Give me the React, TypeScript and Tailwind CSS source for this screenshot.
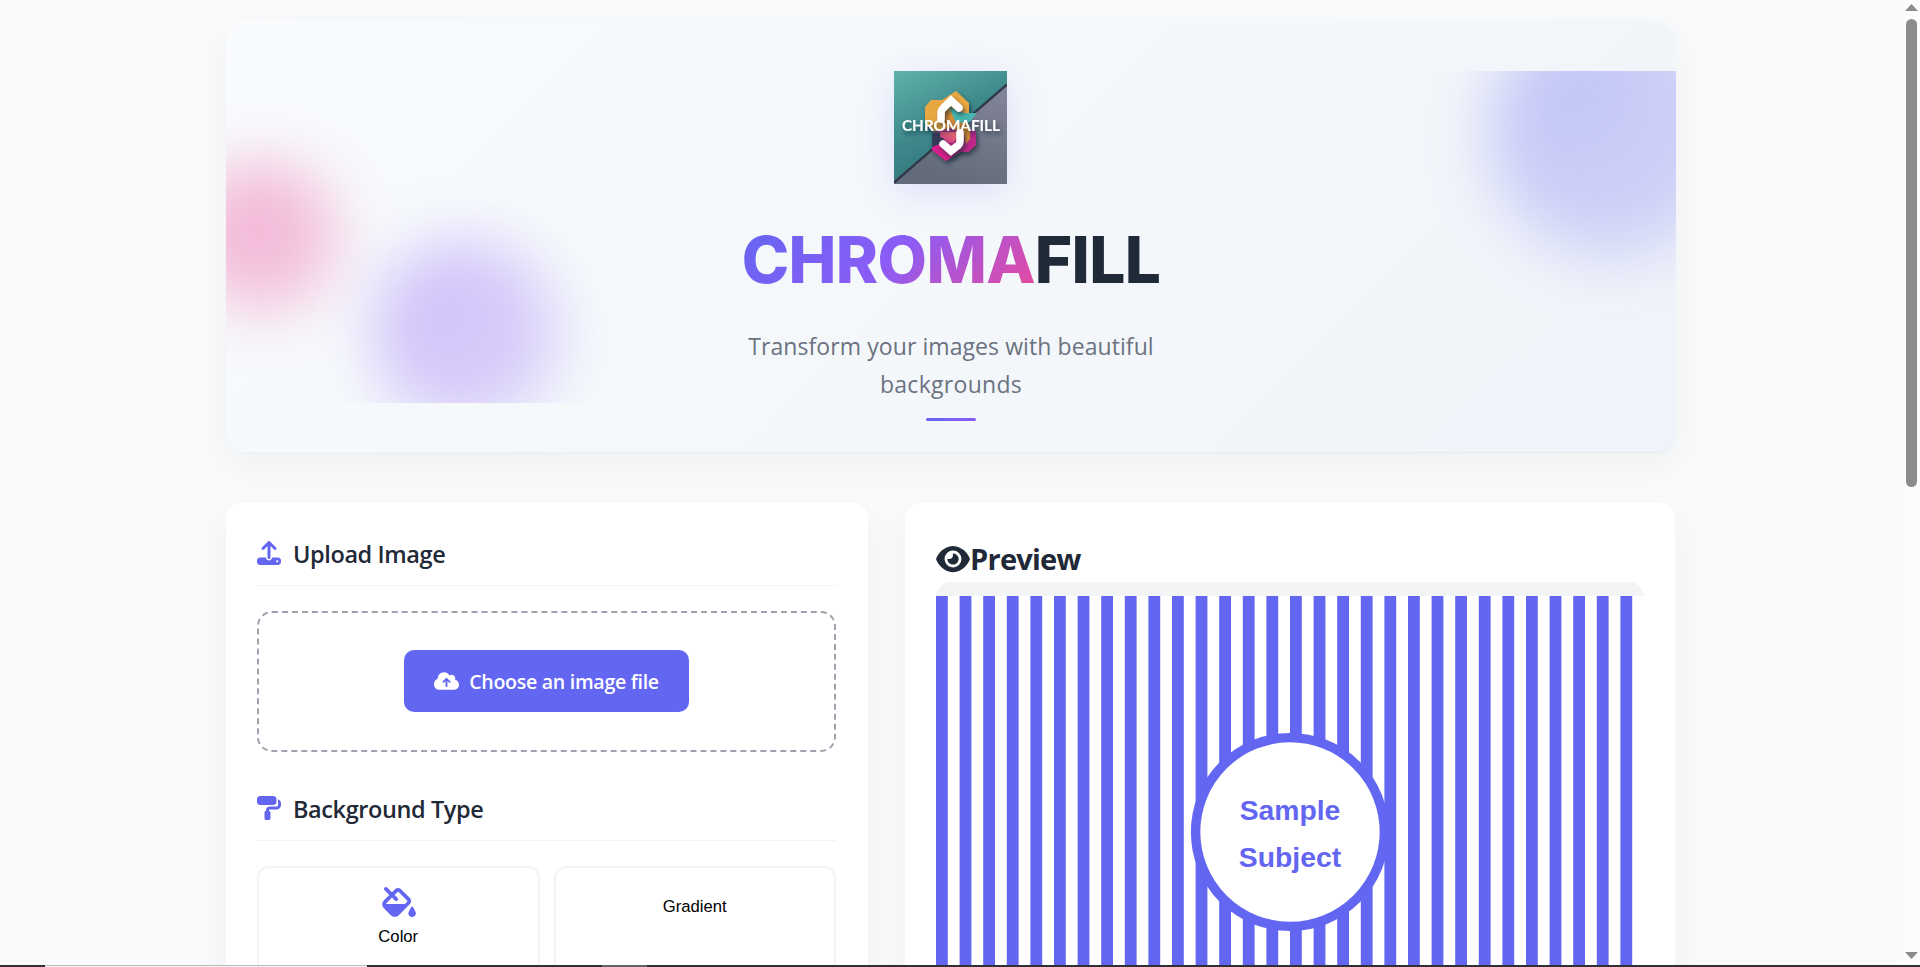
import type { ReactNode } from "react";
import { FaCloudArrowUp, FaEye, FaFillDrip, FaPaintRoller, FaUpload } from "react-icons/fa6";

function Logo() {
  return (
    <svg
      viewBox="0 0 113 113"
      className="relative h-[113px] w-[113px] shadow-[0_8px_38px_rgba(99,102,241,0.17)]"
    >
      <defs>
        <linearGradient id="teal" x1="0" y1="0" x2="0.5" y2="1">
          <stop offset="0" stopColor="#5fb3aa" />
          <stop offset="0.5" stopColor="#3f8a8c" />
          <stop offset="1" stopColor="#2f7078" />
        </linearGradient>
        <linearGradient id="slate" x1="1" y1="0" x2="0.6" y2="1">
          <stop offset="0" stopColor="#85869a" />
          <stop offset="1" stopColor="#636b7a" />
        </linearGradient>
        <linearGradient id="magenta" x1="0" y1="0" x2="1" y2="1">
          <stop offset="0" stopColor="#8c3a86" />
          <stop offset="1" stopColor="#d4208a" />
        </linearGradient>
        <linearGradient id="coral" x1="0" y1="1" x2="1" y2="0">
          <stop offset="0" stopColor="#c02f8c" />
          <stop offset="1" stopColor="#f47a6a" />
        </linearGradient>
        <filter id="soft" x="-30%" y="-30%" width="160%" height="170%">
          <feDropShadow dx="2" dy="3" stdDeviation="2.2" floodColor="#16202e" floodOpacity="0.65" />
        </filter>
      </defs>
      <rect width="113" height="113" fill="url(#teal)" />
      <path d="M0 113V110L113 13V113Z" fill="url(#slate)" />
      <path d="M0 111.5L113 13.5" stroke="#2f3848" strokeWidth="2.4" />
      <g filter="url(#soft)">
        <path d="M31 36L37 29H48L62 20L75 32V50L60 60H40L31 52Z" fill="#e9a743" />
        <path d="M38 62L60 56L82 60V74L74 81H66L52 90L38 79Z" fill="url(#magenta)" />
      </g>
      <path d="M38 62H54L48 76L38 79Z" fill="#353a58" />
      <path d="M38 76L46 73L56 82L62 82L52 90L38 79Z" fill="#d4208a" />
      <path d="M53 40C60 40 64 46 70 50L76 57V68L72 73L70 62L54 56L48 46Z" fill="#d98c34" />
      <path d="M55 36L70 42H83L76 51L62 52Z" fill="#46b5ad" />
      <path d="M46 61H64C64 67 61 72 56 72C52 72 51 67 46 66Z" fill="url(#coral)" />
      <g filter="url(#soft)">
        <path
          d="M47 48V42Q47 39 49.5 36.8L57 29.5L65 37"
          fill="none"
          stroke="#fff"
          strokeWidth="7.5"
          strokeLinecap="round"
          strokeLinejoin="miter"
        />
        <path
          d="M66 62V70Q66 72.5 64 74.5L57 80L49 73"
          fill="none"
          stroke="#fff"
          strokeWidth="7.5"
          strokeLinecap="round"
          strokeLinejoin="miter"
        />
        <text
          x="8"
          y="60"
          textLength="98"
          lengthAdjust="spacingAndGlyphs"
          fill="#fff"
          className="font-[Lato,sans-serif] text-[15.8px] font-bold"
        >
          CHROMAFILL
        </text>
      </g>
    </svg>
  );
}

function Hero() {
  return (
    <header className="relative h-[432px] rounded-[20px] bg-[linear-gradient(135deg,#f9fbfd_0%,#f4f8fb_50%,#f0f3f9_100%)] py-[50px] shadow-[0_12px_38px_rgba(0,0,0,0.045),inset_0_-1px_0_rgba(0,0,0,0.04)]">
      <div className="absolute inset-x-0 top-[50px] h-[332px] overflow-hidden">
        <div className="absolute top-[-62px] right-[-62px] h-[250px] w-[250px] rounded-full bg-[radial-gradient(circle_at_30%_30%,rgba(99,102,241,0.34),rgba(99,102,241,0.18))] blur-[30px]" />
        <div className="absolute bottom-[-25px] left-[145px] h-[188px] w-[188px] rounded-full bg-[radial-gradient(circle_at_30%_30%,rgba(139,92,246,0.36),rgba(139,92,246,0.22))] blur-[30px]" />
        <div className="absolute top-[91px] left-[-38px] h-[150px] w-[150px] rounded-full bg-[radial-gradient(circle_at_30%_30%,rgba(236,72,153,0.38),rgba(236,72,153,0.28))] blur-[29px]" />
      </div>
      <div className="relative flex flex-col items-center">
        <div className="pr-[2px]">
          <Logo />
        </div>
        <h1 className="mt-[37px] flex h-[78px] items-center font-[Inter,sans-serif] text-[64px] leading-[78px] font-extrabold tracking-[-0.64px]">
          <span className="bg-[linear-gradient(135deg,#6366f1_0%,#8b5cf6_50%,#ec4899_100%)] bg-clip-text text-transparent">
            CHROMA
          </span>
          <span className="text-[#1f2937]">FILL</span>
        </h1>
        <p className="mt-[28px] flex flex-col items-center text-[23px] leading-[38px] text-[#6b7280]">
          <span className="tracking-[0.08px]">Transform your images with beautiful</span>
          <span className="tracking-[0.3px]">backgrounds</span>
        </p>
        <div className="mt-[15px] h-[3px] w-[50px] rounded-full bg-linear-to-r from-[#6366f1] to-[#8b5cf6]" />
      </div>
    </header>
  );
}

function SectionTitle({ icon, children }: { icon: ReactNode; children: ReactNode }) {
  return (
    <h2 className="flex h-[52px] items-start gap-[12px] border-b border-[#f3f4f6] text-[23.5px] leading-[40px] font-semibold tracking-[-0.4px] text-[#1f2937]">
      <span className="mt-[7px] text-[24px] leading-none text-[#6366f1]">{icon}</span>
      {children}
    </h2>
  );
}

function Controls() {
  return (
    <section className="w-[642px] rounded-[15px] bg-white pt-[31px] pr-[32px] pl-[31px] shadow-[0_12px_38px_rgba(0,0,0,0.045)]">
      <SectionTitle icon={<FaUpload />}>Upload Image</SectionTitle>
      <div className="mt-[25px] flex h-[141px] justify-center rounded-[15px] border-2 border-dashed border-[#9ca3af] pt-[37px]">
        <button className="flex h-[62px] w-[285px] items-center justify-center gap-[10px] rounded-[10px] bg-[#6366f1] text-[19.6px] font-semibold tracking-[-0.3px] whitespace-nowrap text-white">
          <FaCloudArrowUp className="h-[20px] w-[25px]" />
          <span className="pt-[2px]">Choose an image file</span>
        </button>
      </div>
      <div className="mt-[37px]">
        <SectionTitle icon={<FaPaintRoller />}>Background Type</SectionTitle>
      </div>
      <div className="mt-[25px] grid grid-cols-2 gap-[14px] font-['Liberation_Sans',Arial,sans-serif] text-[16.67px] leading-[20px] text-black">
        <button className="flex h-[120px] flex-col items-center rounded-[12px] border-2 border-[#f3f4f6] pt-[19px]">
          <FaFillDrip className="ml-[1px] h-[30px] w-[34px] text-[#6366f1]" />
          <span className="mt-[10px]">Color</span>
        </button>
        <button className="flex h-[120px] flex-col items-center rounded-[12px] border-2 border-[#f3f4f6] pt-[29px]">
          Gradient
        </button>
      </div>
    </section>
  );
}

const STRIPES = Array.from({ length: 30 }, (_, i) => i * 20);

function SampleImage() {
  return (
    <svg viewBox="0 0 600 400" className="h-[472px] w-[708px]">
      <rect width="600" height="400" fill="#fff" />
      {STRIPES.map((x) => (
        <rect key={x} x={x} width="10" height="400" fill="#6366f1" />
      ))}
      <circle cx="300" cy="200" r="80" fill="#fff" stroke="#6366f1" strokeWidth="8" />
      <g
        fill="#6366f1"
        textAnchor="middle"
        className="font-['Liberation_Sans',Arial,sans-serif] text-[24px] font-bold"
      >
        <text x="300" y="190">Sample</text>
        <text x="300" y="230">Subject</text>
      </g>
    </svg>
  );
}

function Preview() {
  return (
    <section className="w-[770px] rounded-[15px] bg-white px-[31px] pt-[31px] shadow-[0_12px_38px_rgba(0,0,0,0.045)]">
      <h2 className="flex h-[48px] items-center text-[29px] leading-[48px] font-bold tracking-[-0.75px] text-[#1f2937]">
        <FaEye className="mt-[2px] h-[30px] w-[34px]" />
        <span className="pt-[2px]">Preview</span>
      </h2>
      <div className="h-[500px] overflow-hidden rounded-[15px] bg-[#f3f4f6] pt-[14px]">
        <SampleImage />
      </div>
    </section>
  );
}

function Scrollbar() {
  return (
    <div className="flex w-[18px] shrink-0 flex-col items-center bg-[#fcfcfc] pt-[4px] pb-[6px]">
      <svg viewBox="0 0 13 7" className="h-[7px] w-[13px]">
        <path d="M0 7L6.5 0L13 7Z" fill="#8b8b8b" />
      </svg>
      <div className="mt-[8px] h-[468px] w-[11px] rounded-full bg-[#8b8b8b]" />
      <svg viewBox="0 0 13 7" className="mt-auto h-[7px] w-[13px]">
        <path d="M0 0L6.5 7L13 0Z" fill="#8b8b8b" />
      </svg>
    </div>
  );
}

function TaskbarEdge() {
  return (
    <div className="flex h-[2px] bg-[#302f36]">
      <div className="ml-[45px] w-[322px] border-t border-[#bdbdbd] bg-[#f5f5f5]" />
      <div className="ml-[235px] w-[45px] bg-[#636363]" />
    </div>
  );
}

export default function App() {
  return (
    <div className="flex h-[967px] w-[1920px] flex-col overflow-hidden bg-[#f9fafc] font-['Open_Sans','Noto_Sans',sans-serif]">
      <div className="flex h-[965px]">
        <main className="h-[965px] flex-1 overflow-hidden">
          <div className="mx-auto w-[1450px] pt-[21px]">
            <Hero />
            <div className="mt-[50px] flex h-[620px] gap-[37px]">
              <Controls />
              <Preview />
            </div>
          </div>
        </main>
        <Scrollbar />
      </div>
      <TaskbarEdge />
    </div>
  );
}
